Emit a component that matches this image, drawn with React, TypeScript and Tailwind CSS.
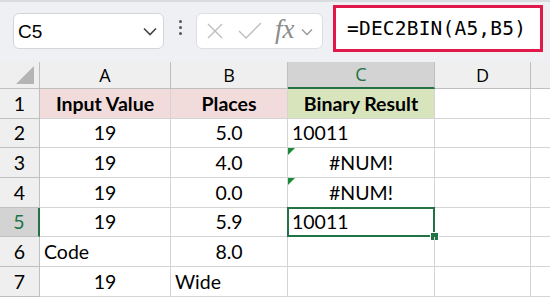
import React from "react";

type Cell = { text?: string; align?: "left" | "center"; bold?: boolean; bg?: string; flag?: boolean };

const rows: Cell[][] = [
    [
        { text: "Input Value", align: "center", bold: true, bg: "bg-[#f2dcdb]" },
        { text: "Places", align: "center", bold: true, bg: "bg-[#f2dcdb]" },
        { text: "Binary Result", align: "center", bold: true, bg: "bg-[#d8e4bc]" },
    ],
    [{ text: "19", align: "center" }, { text: "5.0", align: "center" }, { text: "10011", align: "left" }],
    [{ text: "19", align: "center" }, { text: "4.0", align: "center" }, { text: "#NUM!", align: "center", flag: true }],
    [{ text: "19", align: "center" }, { text: "0.0", align: "center" }, { text: "#NUM!", align: "center", flag: true }],
    [{ text: "19", align: "center" }, { text: "5.9", align: "center" }, { text: "10011", align: "left" }],
    [{ text: "Code", align: "left" }, { text: "8.0", align: "center" }, {}],
    [{ text: "19", align: "center" }, { text: "Wide", align: "left" }, {}],
];

const cols = ["A", "B", "C", "D"];

export default function App() {
    return (
        <div className="w-[550px] h-[298px] overflow-hidden bg-white font-['Lato',sans-serif] text-black">
            {/* toolbar */}
            <div className="h-[62px] bg-[#eef0f3] border-t-2 border-[#d9dcdf] flex items-start">
                <div className="ml-[13px] mt-[11px] w-[151px] h-[36px] bg-white border border-[#d3d5d8] rounded-[6px] flex items-center justify-between pl-[4px] pr-[6px]">
                    <span className="font-['Liberation_Sans',sans-serif] text-[19px] leading-none">C5</span>
                    <svg width="14" height="9" viewBox="0 0 14 9" fill="none" stroke="#444" strokeWidth="1.6">
                        <path d="M1 1.5 L7 7.5 L13 1.5" />
                    </svg>
                </div>
                <div className="w-[32px] h-[48px] flex flex-col items-center justify-center gap-[3px] pt-[2px]">
                    <span className="w-[3px] h-[3px] rounded-full bg-[#555]" />
                    <span className="w-[3px] h-[3px] rounded-full bg-[#555]" />
                    <span className="w-[3px] h-[3px] rounded-full bg-[#555]" />
                </div>
                <div className="mt-[11px] w-[127px] h-[36px] bg-white border border-[#dcdee1] rounded-[6px] flex items-center pl-[9px]">
                    <svg width="18" height="18" viewBox="0 0 18 18" fill="none" stroke="#bdbdbd" strokeWidth="1.4">
                        <path d="M2 2 L16 16 M16 2 L2 16" />
                    </svg>
                    <svg className="ml-[14px]" width="24" height="18" viewBox="0 0 24 18" fill="none" stroke="#bdbdbd" strokeWidth="1.4">
                        <path d="M1 9 L8 16 L23 1" />
                    </svg>
                    <span className="ml-[13px] font-['Liberation_Serif',serif] italic text-[27px] leading-none text-[#8c8c8c] -mt-[3px]">fx</span>
                    <svg className="ml-[6px] mt-[2px]" width="12" height="8" viewBox="0 0 12 8" fill="none" stroke="#9a9a9a" strokeWidth="1.4">
                        <path d="M1 1.5 L6 6.5 L11 1.5" />
                    </svg>
                </div>
                <div className="ml-[10px] mt-[3px] w-[210px] h-[47px] bg-white border-[3px] border-[#e0194a] flex items-center pl-[11px]">
                    <span className="font-['DejaVu_Sans_Mono',monospace] text-[19.5px] leading-none tracking-[0.2px]">=DEC2BIN(A5,B5)</span>
                </div>
            </div>

            {/* sheet */}
            <div className="grid grid-cols-[40px_131px_117px_147px_96px_1fr] grid-rows-[27px_repeat(7,29.7px)] text-[19.5px]">
                <div className="bg-[#efefef] border-r border-b border-[#bfbfbf] flex items-end justify-end pr-[5px] pb-[4px]">
                    <svg width="18" height="18" viewBox="0 0 18 18">
                        <path d="M18 0 L18 18 L0 18 Z" fill="#b4b4b4" />
                    </svg>
                </div>
                {cols.map((c) => (
                    <div
                        key={c}
                        className={
                            c === "C"
                                ? "bg-[#d3d3d3] border-r border-b-2 border-r-[#bfbfbf] border-b-[#217346] text-[#217346] flex items-center justify-center font-['Open_Sans',sans-serif] text-[18px]"
                                : "bg-[#efefef] border-r border-b border-[#bfbfbf] flex items-center justify-center font-['Open_Sans',sans-serif] text-[18px]"
                        }
                    >
                        {c}
                    </div>
                ))}
                <div className="bg-[#efefef] border-b border-[#bfbfbf]" />

                {rows.map((r, i) => (
                    <React.Fragment key={i}>
                        <div
                            className={
                                i === 4
                                    ? "bg-[#d3d3d3] border-r-2 border-b border-r-[#217346] border-b-[#bfbfbf] text-[#217346] flex items-center justify-center"
                                    : "bg-[#efefef] border-r border-b border-[#bfbfbf] flex items-center justify-center"
                            }
                        >
                            {i + 1}
                        </div>
                        {r.concat([{}, {}].slice(0, 3 - r.length)).map((cell, j) => (
                            <div
                                key={j}
                                className={`relative border-r border-b border-[#d4d4d4] flex items-center whitespace-nowrap ${cell.bg ?? ""} ${
                                    cell.align === "center" ? "justify-center" : "pl-[4px]"
                                } ${cell.bold ? "font-bold" : ""}`}
                            >
                                {cell.flag && (
                                    <svg className="absolute left-0 top-0" width="7" height="7" viewBox="0 0 7 7">
                                        <path d="M0 0 L7 0 L0 7 Z" fill="#1a8a3a" />
                                    </svg>
                                )}
                                {cell.text}
                                {i === 4 && j === 2 && (
                                    <>
                                        <div className="absolute -left-[1px] -top-[1px] -right-[1px] -bottom-[1px] border-2 border-[#217346]" />
                                        <div className="absolute -right-[5px] -bottom-[5px] w-[9px] h-[9px] bg-[#217346] border border-white" />
                                    </>
                                )}
                            </div>
                        ))}
                        <div className="border-r border-b border-[#d4d4d4]" />
                        <div className="border-b border-[#d4d4d4]" />
                    </React.Fragment>
                ))}
            </div>
        </div>
    );
}
